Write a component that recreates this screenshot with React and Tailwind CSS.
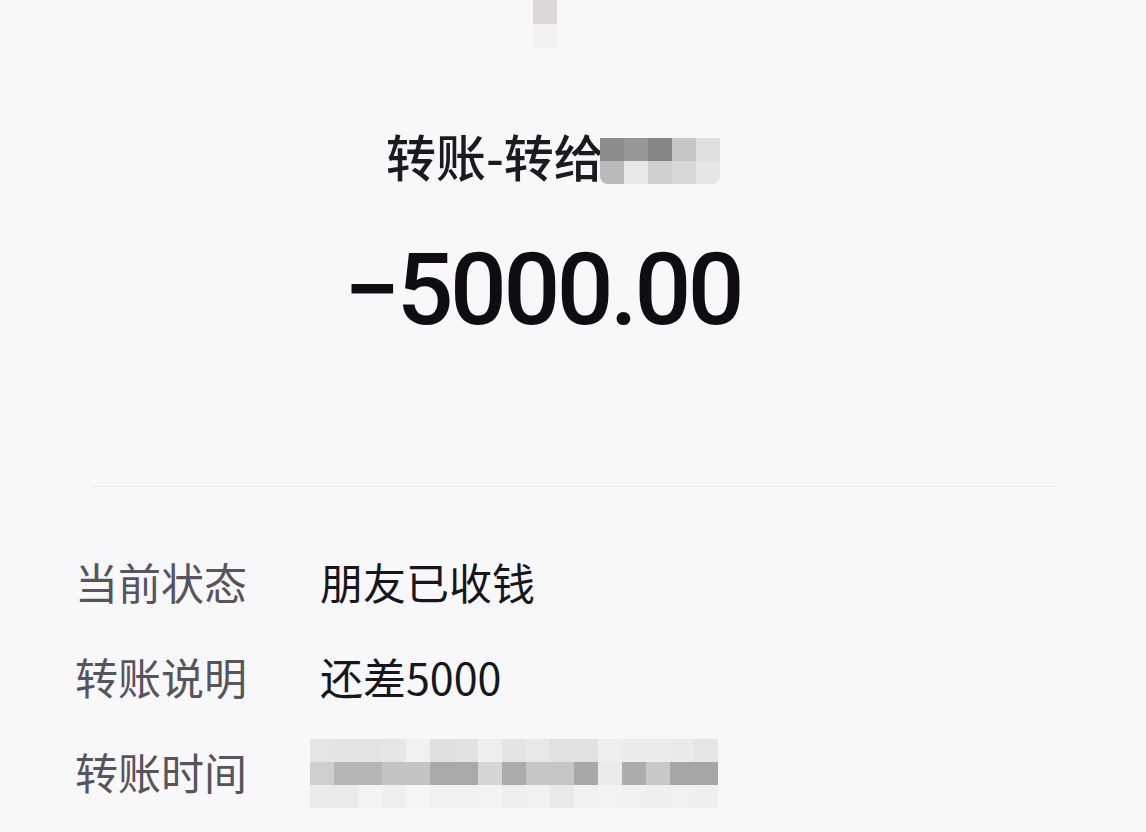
import React from 'react';

const cjk = { fontFamily: '"Noto Sans CJK SC", "Noto Sans", sans-serif' };

// pixelated (blurred) blocks, row by row
const nameCells = [
  ['bg-[#8c8c8f]', 'bg-[#97979a]', 'bg-[#868689]', 'bg-[#c6c6c9]', 'bg-[#dfdfe2]'],
  ['bg-[#b9b9bc]', 'bg-[#e7e7ea]', 'bg-[#d0d0d3]', 'bg-[#d8d8db]', 'bg-[#e6e6e9]'],
];

const timeCells = [
  ['bg-[#e5e5e7]', 'bg-[#e3e3e5]', 'bg-[#e3e3e5]', 'bg-[#e6e6e8]', 'bg-[#f1f1f3]', 'bg-[#e0e0e2]', 'bg-[#e2e2e4]', 'bg-[#efeff1]', 'bg-[#e4e4e6]', 'bg-[#e8e8ea]', 'bg-[#e1e1e3]', 'bg-[#e1e1e3]', 'bg-[#efeff1]', 'bg-[#ececee]', 'bg-[#ececee]', 'bg-[#eaeaec]', 'bg-[#e6e6e8]'],
  ['bg-[#cfcfd1]', 'bg-[#b6b6b8]', 'bg-[#b6b6b8]', 'bg-[#c4c4c6]', 'bg-[#c4c4c6]', 'bg-[#a9a9ab]', 'bg-[#a9a9ab]', 'bg-[#d6d6d8]', 'bg-[#acacae]', 'bg-[#c6c6c8]', 'bg-[#c6c6c8]', 'bg-[#a8a8aa]', 'bg-[#ebebed]', 'bg-[#acacae]', 'bg-[#c8c8ca]', 'bg-[#a6a6a8]', 'bg-[#a6a6a8]'],
  ['bg-[#ebebed]', 'bg-[#ebebed]', 'bg-[#f3f3f5]', 'bg-[#efeff1]', 'bg-[#f5f5f7]', 'bg-[#f1f1f3]', 'bg-[#f1f1f3]', 'bg-[#f3f3f5]', 'bg-[#efeff1]', 'bg-[#f1f1f3]', 'bg-[#e9e9eb]', 'bg-[#f1f1f3]', 'bg-[#f3f3f5]', 'bg-[#f1f1f3]', 'bg-[#efeff1]', 'bg-[#f1f1f3]', 'bg-[#efeff1]'],
];

function Mosaic({ rows, cellW, cellH, className = '' }) {
  return (
    <div className={`flex flex-col shrink-0 ${className}`}>
      {rows.map((row, r) => (
        <div key={r} className="flex">
          {row.map((c, i) => (
            <div key={i} className={c} style={{ width: cellW, height: cellH }} />
          ))}
        </div>
      ))}
    </div>
  );
}

function Row({ label, children }) {
  return (
    <div className="flex items-center h-[95px] pl-[75px]">
      <div className="w-[245px] shrink-0 text-[43px] leading-none text-[#57545c]" style={cjk}>
        {label}
      </div>
      {children}
    </div>
  );
}

export default function App() {
  return (
    <div className="w-full h-[832px] bg-[#f8f8fa] overflow-hidden flex flex-col">
      {/* blurred thing at the very top */}
      <div className="ml-[533px] flex flex-col">
        <div className="w-6 h-6 bg-[#dcd8d9]" />
        <div className="w-6 h-6 bg-[#f2f2f4]" />
      </div>

      {/* title */}
      <div className="mt-[82px] pl-[386px] flex items-start">
        <div className="text-[50px] leading-none font-medium text-[#1b1a1f]" style={cjk}>转账-转给</div>
        <Mosaic rows={nameCells} cellW={24} cellH={23} className="-ml-[4px] mt-[8px] rounded-b-[8px] overflow-hidden" />
      </div>

      {/* amount */}
      <div
        className="mt-[56px] pl-[344px] text-[100px] leading-none font-medium tracking-[-3.5px] text-[#0f0d12]"
        style={{ fontFamily: 'Roboto, "Liberation Sans", sans-serif' }}
      >
        −5000.00
      </div>

      {/* divider */}
      <div className="mt-[146px] mx-[90px] h-px bg-[#ececf0]" />

      {/* details */}
      <div className="mt-[47px] flex flex-col">
        <Row label="当前状态">
          <div className="text-[43px] leading-none text-[#18161d]" style={cjk}>朋友已收钱</div>
        </Row>
        <Row label="转账说明">
          <div className="text-[43px] leading-none text-[#18161d]" style={cjk}>还差5000</div>
        </Row>
        <Row label="转账时间">
          <Mosaic rows={timeCells} cellW={24} cellH={23} className="-ml-[10px] mt-[3px]" />
        </Row>
      </div>
    </div>
  );
}
